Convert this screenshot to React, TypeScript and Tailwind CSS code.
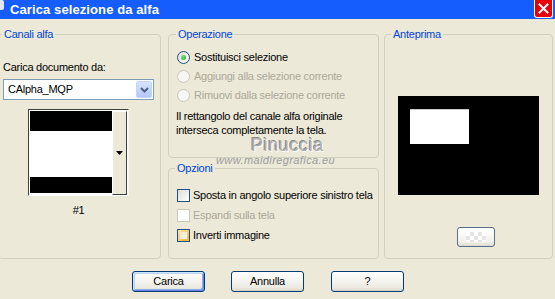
import React from "react";

const legendCls = "px-[2px] text-[11px] leading-[13px] text-[#0046d5]";
const groupCls = "rounded-[4px] border border-[#d0d0bf]";

function Radio({ checked, disabled }: { checked?: boolean; disabled?: boolean }) {
  return (
    <span
      className={`flex h-[13px] w-[13px] shrink-0 items-center justify-center rounded-full border ${
        disabled
          ? "border-[#cac8bb] bg-[#f7f6f2]"
          : "border-[#1c5180] bg-[linear-gradient(135deg,#dcdcd5,#ffffff)]"
      }`}
    >
      {checked && (
        <span className="h-[5px] w-[5px] rounded-full bg-[radial-gradient(circle_at_35%_35%,#7de07d,#21a121)]" />
      )}
    </span>
  );
}

function Check({ disabled, hover }: { disabled?: boolean; hover?: boolean }) {
  if (disabled) return <span className="block h-[13px] w-[13px] shrink-0 border border-[#cac8bb] bg-white" />;
  if (hover)
    return (
      <span className="block h-[13px] w-[13px] shrink-0 border border-[#1c5180] bg-[linear-gradient(135deg,#fde7b0,#f8b330)] p-[2px]">
        <span className="block h-full w-full bg-[linear-gradient(135deg,#f0e6cc,#fbf6e8)]" />
      </span>
    );
  return <span className="block h-[13px] w-[13px] shrink-0 border border-[#1c5180] bg-[linear-gradient(135deg,#dcdcd7,#ffffff)]" />;
}

function XpButton({ children, def }: { children: React.ReactNode; def?: boolean }) {
  return (
    <button
      className={`h-[21px] w-[73px] rounded-[3px] border border-[#003c74] bg-[linear-gradient(180deg,#ffffff_0%,#f5f4f0_45%,#ebe9e0_85%,#d6d0c5_100%)] text-[11px] leading-none text-black ${
        def ? "shadow-[inset_1px_1px_0_#cee7ff,inset_-1px_-1px_0_#6982ee,inset_2px_2px_0_#bcd4f6,inset_-2px_-2px_0_#89ade4]" : ""
      }`}
    >
      {children}
    </button>
  );
}

export default function App() {
  return (
    <div className="relative flex h-[299px] w-[555px] flex-col overflow-hidden bg-[#ece9d8] font-['Liberation_Sans',Arial,sans-serif] text-[11px] tracking-[-0.25px] text-black">
      {/* title bar */}
      <div className="flex h-[19px] w-full shrink-0">
        <div className="flex h-[19px] flex-1 items-start bg-blue-600">
          <span className="h-[10px] w-[4px] shrink-0 rounded-r-[2px] bg-slate-200" />
          <span className="ml-[6px] mt-[3px] text-[13px] font-bold leading-[13px] tracking-[0.1px] text-white">
            Carica selezione da alfa
          </span>
        </div>
        <div className="flex h-[19px] w-[21px] shrink-0 items-start bg-blue-600">
          <span className="flex h-[18px] w-[19px] items-center justify-center rounded-b-[3px] border border-t-0 border-white bg-red-600">
            <svg width="11" height="11" viewBox="0 0 11 11">
              <path d="M1.5 1.5 L9.5 9.5 M9.5 1.5 L1.5 9.5" stroke="#ffffff" strokeWidth="2" strokeLinecap="square" />
            </svg>
          </span>
        </div>
      </div>

      {/* groups */}
      <div className="flex pt-[9px]">
        {/* Canali alfa */}
        <fieldset className={`${groupCls} -ml-[2px] h-[231px] w-[163px] shrink-0`}>
          <legend className={`${legendCls} ml-[3px]`}>Canali alfa</legend>
          <div className="flex flex-col pl-[4px] pt-[20px]">
            <span className="leading-[13px]">Carica documento da:</span>
            <div className="mt-[5px] flex h-[21px] w-[151px] items-center border border-[#7f9db9] bg-white p-[1px]">
              <span className="flex-1 pl-[3px]">CAlpha_MQP</span>
              <span className="flex h-[17px] w-[16px] items-center justify-center rounded-[2px] border border-[#c3d3fd] bg-[linear-gradient(180deg,#d8e4fd,#b4c8f6)]">
                <svg width="9" height="6" viewBox="0 0 9 6">
                  <path d="M1 1 L4.5 4.5 L8 1" fill="none" stroke="#4d6185" strokeWidth="2" />
                </svg>
              </span>
            </div>
            <div className="ml-[25px] mt-[9px] flex h-[87px] w-[101px] border border-[#404040] border-b-white border-r-[#f4f3ee] bg-white p-[1px]">
              <div className="flex w-[82px] flex-col">
                <div className="h-[20px] bg-black" />
                <div className="h-[46px] bg-white" />
                <div className="h-[16px] bg-black" />
              </div>
              <div className="flex h-[84px] flex-1 items-center justify-center border border-l-white border-t-white border-b-[#404040] border-r-[#404040] bg-[#ece9d8]">
                <svg width="7" height="4" viewBox="0 0 7 4">
                  <path d="M0 0 H7 L3.5 4 Z" fill="black" />
                </svg>
              </div>
            </div>
            <span className="ml-[25px] mt-[8px] w-[101px] text-center leading-[13px]">#1</span>
          </div>
        </fieldset>

        {/* middle column */}
        <div className="ml-[7px] flex w-[211px] shrink-0 flex-col">
          <fieldset className={`${groupCls} h-[130px]`}>
            <legend className={`${legendCls} ml-[7px]`}>Operazione</legend>
            <div className="flex flex-col whitespace-nowrap pl-[8px] pt-[7px]">
              <div className="flex h-[19px] items-center gap-[4px]">
                <Radio checked />
                <span>Sostituisci selezione</span>
              </div>
              <div className="flex h-[19px] items-center gap-[4px] text-[#aca899]">
                <Radio disabled />
                <span>Aggiungi alla selezione corrente</span>
              </div>
              <div className="flex h-[19px] items-center gap-[4px] text-[#aca899]">
                <Radio disabled />
                <span>Rimuovi dalla selezione corrente</span>
              </div>
              <p className="-ml-[1px] mt-[4px] leading-[14px]">
                Il rettangolo del canale alfa originale
                <br />
                interseca completamente la tela.
              </p>
            </div>
          </fieldset>
          <fieldset className={`${groupCls} mt-[4px] h-[97px]`}>
            <legend className={`${legendCls} ml-[6px]`}>Opzioni</legend>
            <div className="flex flex-col whitespace-nowrap pl-[8px] pt-[10px]">
              <div className="flex h-[20px] items-center gap-[3px]">
                <Check />
                <span>Sposta in angolo superiore sinistro tela</span>
              </div>
              <div className="flex h-[20px] items-center gap-[3px] text-[#aca899]">
                <Check disabled />
                <span>Espandi sulla tela</span>
              </div>
              <div className="flex h-[20px] items-center gap-[3px]">
                <Check hover />
                <span>Inverti immagine</span>
              </div>
            </div>
          </fieldset>
        </div>

        {/* Anteprima */}
        <fieldset className={`${groupCls} ml-[5px] h-[231px] w-[169px] shrink-0`}>
          <legend className={`${legendCls} ml-[6px]`}>Anteprima</legend>
          <div className="flex flex-col items-center pt-[55px]">
            <div className="h-[99px] w-[141px] bg-black pl-[12px] pt-[13px]">
              <div className="h-[35px] w-[59px] border-t border-[#c8c8c8] bg-white" />
            </div>
            <div className="ml-[14px] mt-[32px] flex h-[20px] w-[38px] items-center justify-center rounded-[3px] border border-[#5a6e8c] bg-[linear-gradient(180deg,#ffffff,#f1f0ea_80%,#dcd8cc)]">
              <span className="h-[10px] w-[20px] bg-[repeating-conic-gradient(#e4e4e4_0%_25%,#ffffff_0%_50%)] [background-size:8px_8px]" />
            </div>
          </div>
        </fieldset>
      </div>

      {/* buttons */}
      <div className="mt-[12px] flex pl-[132px]">
        <XpButton def>Carica</XpButton>
        <div className="ml-[26px]">
          <XpButton>Annulla</XpButton>
        </div>
        <div className="ml-[27px]">
          <XpButton>?</XpButton>
        </div>
      </div>

      {/* watermark */}
      <div className="pointer-events-none absolute left-[251px] top-[135px] text-[18px] leading-[20px] tracking-[0.6px] text-[#b0b0b0] [text-shadow:1px_1px_0_#ffffff,-1px_-1px_0_#8a8a8a]">
        Pinuccia
      </div>
      <div className="pointer-events-none absolute left-[216px] top-[154px] text-[11px] italic leading-[13px] tracking-[0.4px] text-[#9c9c9c]">
        www.maidiregrafica.eu
      </div>
    </div>
  );
}
